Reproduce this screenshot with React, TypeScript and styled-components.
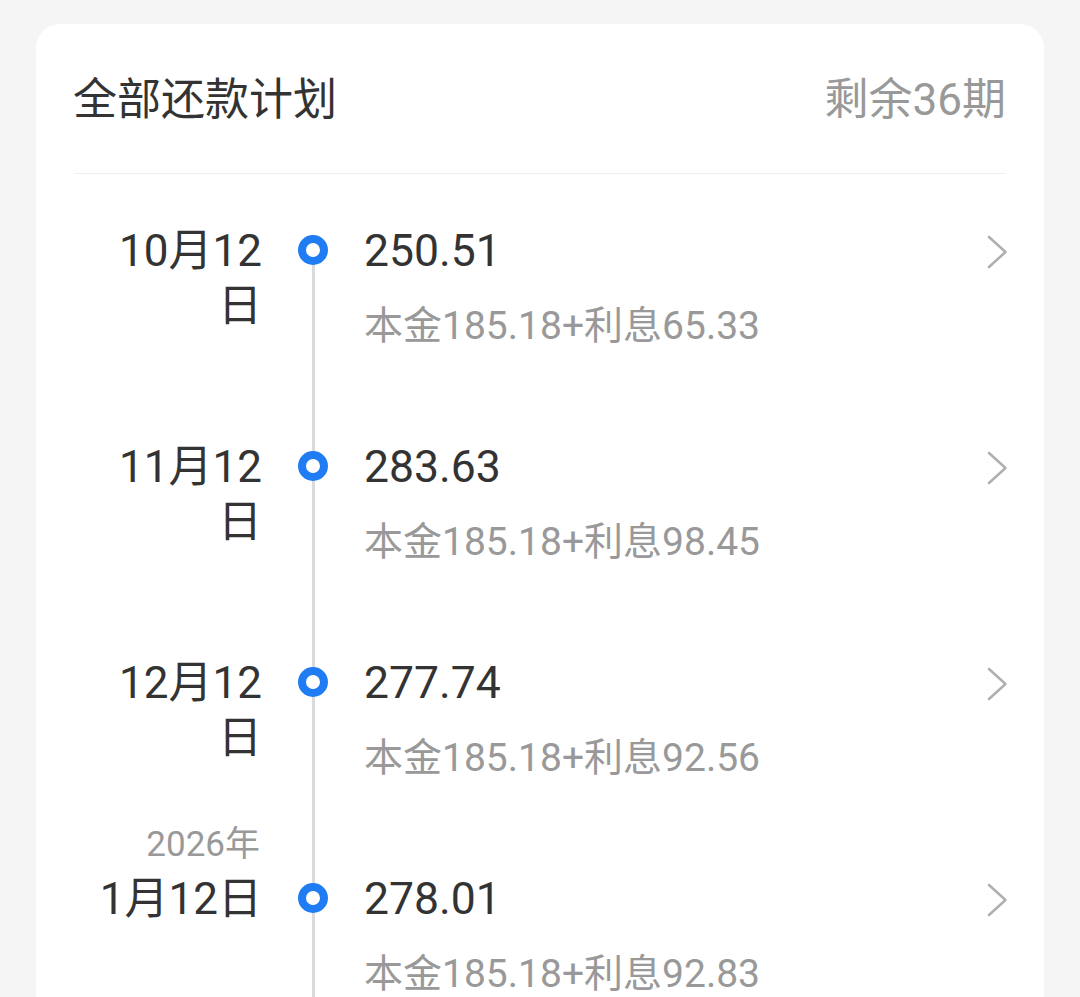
import React from 'react'
import styled, { createGlobalStyle } from 'styled-components'

const GlobalStyle = createGlobalStyle`
  html, body {
    margin: 0;
    padding: 0;
    background: #f5f5f5;
    overflow: hidden;
  }
  body {
    font-family: Roboto, "Noto Sans CJK SC", sans-serif;
    color: #333333;
  }
`

interface Plan {
  date: string
  year?: string
  amount: string
  principal: string
  interest: string
}

const plans: Plan[] = [
  { date: '10月12日', amount: '250.51', principal: '185.18', interest: '65.33' },
  { date: '11月12日', amount: '283.63', principal: '185.18', interest: '98.45' },
  { date: '12月12日', amount: '277.74', principal: '185.18', interest: '92.56' },
  { date: '1月12日', year: '2026年', amount: '278.01', principal: '185.18', interest: '92.83' },
]

const Page = styled.div`
  padding: 24px 36px 0;
  height: 997px;
  box-sizing: border-box;
`

const Card = styled.div`
  background: #ffffff;
  border-radius: 24px;
  padding: 0 38px;
  min-height: 1100px;
`

const Header = styled.div`
  display: flex;
  align-items: center;
  justify-content: space-between;
  height: 149px;
  border-bottom: 1px solid #efefef;
`

const Title = styled.div`
  font-size: 44px;
  line-height: 1;
  color: #333333;
  margin-top: 2px;
  margin-left: -1px;
`

const Remaining = styled.div`
  font-size: 44px;
  line-height: 1;
  color: #999999;
  margin-top: 2px;
`

const Item = styled.div`
  display: grid;
  grid-template-columns: 188px 102px 1fr 40px;
  grid-template-rows: 50px 55px auto;
  height: 216px;
`

const Year = styled.div`
  grid-column: 1;
  grid-row: 1;
  font-size: 35px;
  line-height: 46px;
  color: #999999;
  text-align: right;
  padding-right: 2px;
`

const DateText = styled.div`
  grid-column: 1;
  grid-row: 2 / span 2;
  padding-left: 16px;
  font-size: 44px;
  line-height: 55px;
  text-align: right;
  color: #333333;
`

const Track = styled.div<{ $first: boolean }>`
  grid-column: 2;
  grid-row: 1 / -1;
  position: relative;
  display: flex;
  justify-content: center;

  &::before {
    content: '';
    position: absolute;
    left: 50%;
    margin-left: -1.5px;
    width: 3px;
    top: ${({ $first }) => ($first ? '76px' : '0')};
    bottom: 0;
    background: #dadada;
  }
`

const Dot = styled.span`
  position: relative;
  z-index: 1;
  margin-top: 61px;
  width: 30px;
  height: 30px;
  box-sizing: border-box;
  border-radius: 50%;
  border: 8px solid #1f7cf2;
  background: #ffffff;
`

const Amount = styled.div`
  grid-column: 3;
  grid-row: 2;
  font-size: 44.5px;
  line-height: 55px;
  color: #333333;
`

const Breakdown = styled.div`
  grid-column: 3;
  grid-row: 3;
  margin-top: 22px;
  font-size: 39px;
  line-height: 50px;
  color: #999999;
`

const Arrow = styled.div`
  grid-column: 4;
  grid-row: 2;
  align-self: center;
  justify-self: end;
  display: flex;
  margin-right: -2px;
`

const Chevron = () => (
  <svg width="21" height="34" viewBox="0 0 21 34" fill="none">
    <polyline points="2,2 18.5,17 2,32" stroke="#b0b0b0" strokeWidth="2.6" strokeLinecap="round" strokeLinejoin="round" />
  </svg>
)

const App: React.FC = () => (
  <Page>
    <GlobalStyle />
    <Card>
      <Header>
        <Title>全部还款计划</Title>
        <Remaining>剩余36期</Remaining>
      </Header>
      {plans.map((p, i) => (
        <Item key={p.date}>
          {p.year && <Year>{p.year}</Year>}
          <DateText>{p.date}</DateText>
          <Track $first={i === 0}>
            <Dot />
          </Track>
          <Amount>{p.amount}</Amount>
          <Breakdown>
            本金{p.principal}+利息{p.interest}
          </Breakdown>
          <Arrow>
            <Chevron />
          </Arrow>
        </Item>
      ))}
    </Card>
  </Page>
)

export default App
